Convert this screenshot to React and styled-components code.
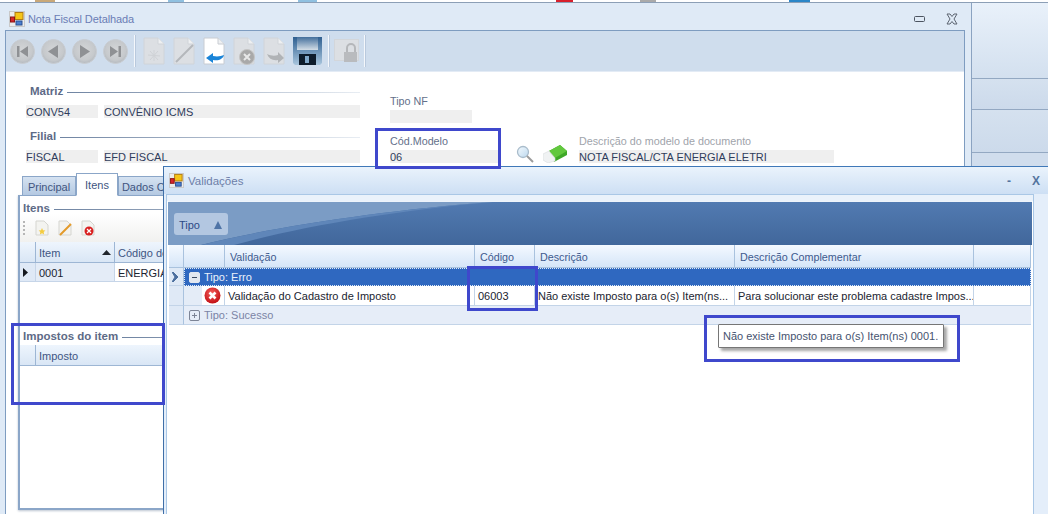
import React from 'react';
import styled, { createGlobalStyle } from 'styled-components';

const GlobalStyle = createGlobalStyle`
  html, body {
    margin: 0;
    padding: 0;
    background: #dfeaf6;
  }
  #root {
    width: 1048px;
    height: 514px;
    overflow: hidden;
    font-family: "Liberation Sans", "Noto Sans", sans-serif;
  }
`;

const Screen = styled.div`
  position: relative;
  width: 1048px;
  height: 514px;
  overflow: hidden;
  display: flex;
  flex-direction: column;
`;

const TopStrip = styled.div`
  height: 2px;
  border-bottom: 1px solid #8c9fb6;
  background: linear-gradient(to right,
    #fff 35px, #c9a878 35px, #c9a878 55px, #fff 55px,
    #fff 168px, #8fc0e0 168px, #8fc0e0 184px, #fff 184px,
    #fff 298px, #8fc0e0 298px, #8fc0e0 317px, #fff 317px,
    #fff 556px, #d8202c 556px, #d8202c 573px, #fff 573px,
    #fff 640px, #aaa 640px, #aaa 656px, #fff 656px,
    #fff 789px, #2a86c8 789px, #2a86c8 810px, #fff 810px);
`;

const Desktop = styled.div`
  flex: 1;
  display: flex;
  min-height: 0;
`;

const MainWindow = styled.div`
  width: 971px;
  border-right: 1px solid #8ba3c1;
  background: #dfeaf6;
  display: flex;
  flex-direction: column;
`;

const TitleBar = styled.div`
  height: 27px;
  box-sizing: border-box;
  display: flex;
  align-items: center;
  padding: 4px 13px 0 9px;
  gap: 3px;
  color: #6b7db5;
  font-size: 11px;
  letter-spacing: -0.1px;
`;

const TitleText = styled.span`
  flex: 1;
`;

const MainControls = styled.div`
  display: flex;
  align-items: center;
  gap: 21px;
`;

const Body = styled.div`
  flex: 1;
  margin: 0 6px 0 5px;
  border: 1px solid #7e9cc0;
  border-bottom: none;
  background: #fff;
  display: flex;
  flex-direction: column;
  min-height: 0;
`;

const Toolbar = styled.div`
  height: 40px;
  background: #cfdded;
  border-bottom: 1px solid #e3ebf5;
  display: flex;
  align-items: center;
  padding-left: 4px;
  flex-shrink: 0;
`;

const NavGroup = styled.div`
  display: flex;
  gap: 6px;
  margin-right: 6px;
`;

const DocGroup = styled.div`
  display: flex;
  align-items: center;
  gap: 8px;
  margin: 0 6px 0 8px;
`;

const LockGroup = styled.div`
  display: flex;
  align-items: center;
  margin: 0 5px;
`;

const Separator = styled.div`
  width: 1px;
  height: 32px;
  background: #f4f7fb;
  box-shadow: 1px 0 0 #b9c9dd;
`;

const Form = styled.div`
  display: flex;
  height: 101px;
  flex-shrink: 0;
`;

const LeftColumn = styled.div`
  width: 334px;
  margin-left: 20px;
  padding-top: 12px;
`;

const RightColumn = styled.div`
  margin-left: 30px;
  padding-top: 22px;
  display: flex;
  flex-direction: column;
`;

const SectionHead = styled.div`
  display: flex;
  align-items: center;
  gap: 4px;
  height: 13px;
  padding-left: 4px;
  margin-bottom: 8px;
  font-size: 11.5px;
  font-weight: 700;
  color: #5d6a86;
  white-space: nowrap;

  &::after {
    content: "";
    flex: 1;
    height: 1px;
    margin-top: 3px;
    background: linear-gradient(to right, #6f84a2, #e8edf3);
  }
`;

const FieldRow = styled.div`
  display: flex;
  gap: 6px;
  margin-bottom: 11px;
`;

const Field = styled.div`
  width: ${p => p.$w}px;
  height: 13px;
  line-height: 15px;
  background: #efefef;
  color: #2f3d5c;
  font-size: 11px;
  white-space: nowrap;
  overflow: hidden;
`;

const FieldLabel = styled.div`
  height: 14px;
  line-height: 14px;
  margin-bottom: 2px;
  color: ${p => (p.$muted ? '#a0a4ab' : '#64708a')};
  font-size: 10.75px;
  white-space: nowrap;
`;

const FieldStack = styled.div`
  display: flex;
  flex-direction: column;
  margin-bottom: ${p => p.$gap || 0}px;
`;

const ModelRow = styled.div`
  display: flex;
  align-items: flex-end;
`;

const LookupIcons = styled.div`
  display: flex;
  align-items: center;
  gap: 9px;
  margin: 0 11px 0 18px;
`;

const TabArea = styled.div`
  flex: 1;
  margin-left: 12px;
  display: flex;
  flex-direction: column;
  min-height: 0;
`;

const TabStrip = styled.div`
  height: 23px;
  display: flex;
  align-items: flex-end;
  padding-left: 4px;
  margin-bottom: -1px;
  position: relative;
`;

const Tab = styled.div`
  height: ${p => (p.$active ? 23 : 20)}px;
  width: ${p => p.$w}px;
  box-sizing: border-box;
  border: 1px solid #8ba6c8;
  border-bottom: ${p => (p.$active ? '1px solid #fff' : '1px solid #8ba6c8')};
  background: ${p => (p.$active ? '#fff' : 'linear-gradient(#d5e2f1, #b4c9e2)')};
  color: #41557f;
  font-size: 11px;
  text-align: center;
  line-height: ${p => (p.$active ? 22 : 20)}px;
  white-space: nowrap;
  overflow: hidden;
`;

const TabPanel = styled.div`
  width: 420px;
  height: 315px;
  box-sizing: border-box;
  border: 1px solid #8ba6c8;
  border-left-width: 2px;
  border-bottom-width: 2px;
  background: #fff;
  box-shadow: 0 1px 2px rgba(90, 110, 140, 0.4);
`;

const PanelHead = styled(SectionHead)`
  margin: 5px 0 0;
  height: 13px;
  padding-left: 3px;
`;

const ItemTools = styled.div`
  height: 28px;
  display: flex;
  align-items: center;
  padding-left: 3px;
  gap: 9px;
  background: linear-gradient(#fff, #f1f1ef);
`;

const Grip = styled.div`
  width: 2px;
  height: 15px;
  margin-right: 1px;
  background: repeating-linear-gradient(#b6b6b6 0 2px, transparent 2px 4px);
`;

const LeftGrid = styled.div`
  display: grid;
  grid-template-columns: 16px 79px 1fr;
  grid-auto-rows: min-content;
  margin-top: ${p => p.$top || 0}px;
`;

const LeftHead = styled.div`
  grid-column: ${p => p.$span || 'auto'};
  height: 21px;
  box-sizing: border-box;
  display: flex;
  align-items: center;
  justify-content: ${p => (p.$spread ? 'space-between' : 'flex-start')};
  padding: 1px 3px 0;
  background: linear-gradient(#eef5fd, #d9e6f5);
  border-right: 1px solid #9db6d4;
  border-bottom: 1px solid #9db6d4;
  color: #3e5582;
  font-size: 11px;
  white-space: nowrap;
`;

const LeftCell = styled.div`
  height: 19px;
  box-sizing: border-box;
  display: flex;
  align-items: center;
  padding: 1px 3px 0;
  background: ${p => p.$tone || '#fff'};
  border-right: 1px solid #c6d5e8;
  border-bottom: 1px solid #c6d5e8;
  color: #1b2430;
  font-size: 11px;
  white-space: nowrap;
`;

const GridGap = styled.div`
  height: 42px;
`;

const ValidationWindow = styled.div`
  position: absolute;
  z-index: 2;
  left: 163px;
  top: 166px;
  right: 0;
  bottom: 0;
  border-left: 1px solid #3f6fa8;
  border-top: 1px solid #3f78b8;
  background: #e4eefa;
  display: flex;
  flex-direction: column;
`;

const ValidationTitle = styled.div`
  height: 27px;
  display: flex;
  align-items: center;
  gap: 4px;
  padding: 0 8px 0 5px;
  color: #6d7ea8;
  font-size: 11.5px;
  background: linear-gradient(#eaf3fc, #cddff4);
`;

const ValidationControls = styled.div`
  display: flex;
  align-items: center;
  gap: 21px;
  padding-top: 1px;
  color: #54749e;
  font-size: 12px;
  font-weight: 700;
`;

const ValidationBody = styled.div`
  flex: 1;
  margin: 0 14px 0 2px;
  border: 1px solid #a9c7e6;
  border-bottom: none;
  display: flex;
  flex-direction: column;
  padding: 6px 1px 0 2px;
  background: linear-gradient(#eaf2fb 6px, #fff 6px);
`;

const GroupPanel = styled.div`
  position: relative;
  height: 44px;
  margin-left: -1px;
  flex-shrink: 0;
  display: flex;
  align-items: center;
  padding: 2px 0 0 6px;
  box-sizing: border-box;
  overflow: hidden;
  background: linear-gradient(#527bb2, #41679b);
  box-shadow: inset 0 1px 0 #eef4fb;
`;

const Swoosh = styled.svg`
  position: absolute;
  left: 0;
  top: 0;
`;

const GroupChip = styled.div`
  position: relative;
  width: 54px;
  height: 22px;
  box-sizing: border-box;
  display: flex;
  align-items: center;
  justify-content: space-between;
  padding: 1px 6px 0 5px;
  border-radius: 3px;
  background: #b3c7e1;
  color: #2c4a86;
  font-size: 11px;
`;

const ChipArrow = styled.span`
  width: 0;
  height: 0;
  border-left: 4px solid transparent;
  border-right: 4px solid transparent;
  border-bottom: 8px solid #4f74a6;
`;

const ResultGrid = styled.div`
  display: grid;
  grid-template-columns: 15px 41px 250px 60px 200px 239px 1fr;
  width: 862px;
`;

const ResultHead = styled.div`
  height: 23px;
  box-sizing: border-box;
  display: flex;
  align-items: center;
  padding: 2px 5px 0;
  background: linear-gradient(#f4f9ff, #d5e5f8);
  border-right: 1px solid #a9c2de;
  border-bottom: 1px solid #a9c2de;
  color: #3e5a8e;
  font-size: 10.75px;
  white-space: nowrap;
`;

const RowHead = styled.div`
  height: ${p => p.$h}px;
  box-sizing: border-box;
  display: flex;
  align-items: center;
  justify-content: center;
  background: #dfe9f6;
  border-right: 1px solid #a9c2de;
  border-bottom: 1px solid #c3d4e8;
  color: #4c6f9e;
`;

const GroupRow = styled.div`
  grid-column: 2 / -1;
  height: ${p => p.$h}px;
  box-sizing: border-box;
  display: flex;
  align-items: center;
  gap: 4px;
  padding-left: 5px;
  font-size: 11px;
  line-height: 13px;
  background: ${p => (p.$selected ? '#2f68c0' : '#e6edf8')};
  color: ${p => (p.$selected ? '#eaf1fb' : '#7b84a6')};
  outline: ${p => (p.$selected ? '1px dotted #dfe9f6' : 'none')};
  outline-offset: -1px;
  border-bottom: ${p => (p.$selected ? 'none' : '1px solid #c3d4e8')};
`;

const IconCell = styled.div`
  height: 20px;
  box-sizing: border-box;
  display: flex;
  align-items: center;
  justify-content: flex-end;
  padding-right: 3px;
  background: linear-gradient(to right, #e4ecf7 18px, #fff 18px);
  border-right: 1px solid #c3d4e8;
  border-bottom: 1px solid #c3d4e8;
`;

const DataCell = styled.div`
  height: 20px;
  box-sizing: border-box;
  line-height: 20px;
  padding: 0 3px;
  background: #fff;
  border-right: 1px solid #c3d4e8;
  border-bottom: 1px solid #c3d4e8;
  color: #1b2430;
  font-size: 11px;
  white-space: nowrap;
  overflow: hidden;
`;

const Tooltip = styled.div`
  position: absolute;
  z-index: 3;
  left: 718px;
  top: 324px;
  width: 226px;
  height: 24px;
  box-sizing: border-box;
  border: 1px solid #767676;
  border-radius: 1px;
  background: #fff;
  box-shadow: 3px 3px 3px rgba(0, 0, 0, 0.35);
  color: #46536f;
  font-size: 11px;
  line-height: 23px;
  padding-left: 4px;
  white-space: nowrap;
`;

const Annotation = styled.div`
  position: absolute;
  z-index: 4;
  left: ${p => p.$x}px;
  top: ${p => p.$y}px;
  width: ${p => p.$w}px;
  height: ${p => p.$h}px;
  box-sizing: border-box;
  border: 3px solid #3f48cc;
  pointer-events: none;
`;

const RightPane = styled.div`
  flex: 1;
  display: flex;
  flex-direction: column;
  background: #d0dded;
`;

const PaneBlock = styled.div`
  height: ${p => p.$h}px;
  flex-shrink: 0;
  border-bottom: 1px solid #93a8c2;
  background: ${p => p.$bg || 'linear-gradient(#d5e1ef, #ccdaeb)'};
`;

const AppIcon = ({ size = 16 }) => (
  <svg width={size} height={size} viewBox="0 0 16 16">
    <rect x="0.500" y="0.500" width="15" height="15" fill="#ececec" stroke="#c9c9c9" />
    <rect x="6" y="1.500" width="8" height="7" fill="#f5c518" stroke="#b07a10" />
    <rect x="1.500" y="6" width="4" height="5" fill="#d8242a" stroke="#8a1515" />
    <rect x="7" y="10" width="6" height="4" fill="#4a7fd0" stroke="#2a4f90" />
  </svg>
);

const NavButton = ({ dir }) => (
  <svg width="25" height="25" viewBox="0 0 25 25">
    <defs>
      <radialGradient id={`nav-${dir}`} cx="50%" cy="45%" r="55%">
        <stop offset="0%" stopColor="#d4d6d8" />
        <stop offset="75%" stopColor="#c6c9cc" />
        <stop offset="100%" stopColor="#b4b9be" />
      </radialGradient>
    </defs>
    <circle cx="12.500" cy="12.500" r="12" fill={`url(#nav-${dir})`} stroke="#c9cdd2" />
    {dir === 'first' && <path d="M7 7h2.500v11H7zM10 12.500 18 7v11z" fill="#8f9194" />}
    {dir === 'prev' && <path d="M7 12.500 17 6v13z" fill="#8f9194" />}
    {dir === 'next' && <path d="M18 12.500 8 6v13z" fill="#8f9194" />}
    {dir === 'last' && <path d="M15.500 7H18v11h-2.500zM15 12.500 7 7v11z" fill="#8f9194" />}
  </svg>
);

const Page = ({ fill = '#dcdfe3', edge = '#d0d4d9', children }) => (
  <svg width="22" height="28" viewBox="0 0 22 28">
    <path d="M1 1h14l6 6v20H1z" fill={fill} stroke={edge} />
    <path d="M15 1v6h6" fill="#eef0f2" stroke={edge} />
    {children}
  </svg>
);

const NewDoc = () => (
  <Page>
    <path d="M11 13v11M5 18l12 1M7 14l8 9M15 14l-8 9" stroke="#cfd2d6" strokeWidth="1" />
  </Page>
);

const EditDoc = () => (
  <Page>
    <path d="M3 25 20 8" stroke="#b4b7bb" strokeWidth="2" />
  </Page>
);

const UndoDoc = () => (
  <Page fill="#fff" edge="#c8ccd2">
    <path d="M21 18c-1 4-5 6-11 5v3l-7-5 7-5v3c5 1 8 0 11-1z" fill="#1a84d8" />
  </Page>
);

const CancelDoc = () => (
  <Page>
    <circle cx="14" cy="20" r="7.500" fill="#a9a9a9" stroke="#c5c5c5" />
    <path d="M11 17l6 6M17 17l-6 6" stroke="#e8e8e8" strokeWidth="2" />
  </Page>
);

const RedoDoc = () => (
  <Page>
    <path d="M4 17c4 2 8 2 11 1v-3l6 6-6 5v-3c-5 1-9-1-11-6z" fill="#b0b3b6" />
  </Page>
);

const SaveIcon = () => (
  <svg width="29" height="28" viewBox="0 0 29 28">
    <defs>
      <linearGradient id="floppy" x1="0" y1="0" x2="0" y2="1">
        <stop offset="0%" stopColor="#2f5f90" />
        <stop offset="100%" stopColor="#a9c6de" />
      </linearGradient>
      <linearGradient id="floppy-label" x1="0" y1="0" x2="0" y2="1">
        <stop offset="0%" stopColor="#436f9c" />
        <stop offset="100%" stopColor="#d3dde6" />
      </linearGradient>
    </defs>
    <path d="M0 0h29v26l-2 2H2l-2-2z" fill="url(#floppy)" />
    <rect x="4" y="0" width="21" height="13" fill="url(#floppy-label)" />
    <rect x="6" y="17" width="17" height="11" fill="#0e1c2c" />
    <rect x="12" y="19" width="4" height="7" fill="#7fa6c8" />
  </svg>
);

const LockIcon = () => (
  <svg width="25" height="26" viewBox="0 0 25 26">
    <rect x="0.500" y="1.500" width="24" height="21" fill="#dcdfe3" stroke="#d3d6da" />
    <path d="M13 15v-5a4 4 0 0 1 8 0v5" fill="none" stroke="#b5b7ba" strokeWidth="2" />
    <rect x="10" y="14" width="13" height="10" fill="#b9bbbe" />
  </svg>
);

const SearchIcon = () => (
  <svg width="18" height="18" viewBox="0 0 18 18">
    <defs>
      <linearGradient id="lens" x1="0" y1="0" x2="1" y2="1">
        <stop offset="0%" stopColor="#f4fafe" />
        <stop offset="100%" stopColor="#bcd8ee" />
      </linearGradient>
    </defs>
    <circle cx="7" cy="7" r="5.500" fill="url(#lens)" stroke="#a9bccb" strokeWidth="1.300" />
    <path d="M11 11l6 6" stroke="#9c9c9c" strokeWidth="2" />
  </svg>
);

const EraserIcon = () => (
  <svg width="25" height="18" viewBox="0 0 25 18">
    <path d="M6 6 17 0l7 6v4L11 17z" fill="#3fa828" />
    <path d="M6 6 17 0l7 6-12 7z" fill="#62c83e" />
    <path d="M0 9l6-3 6 7v3l-7 2-5-3z" fill="#f0f2f3" stroke="#d8dbdd" strokeWidth="0.600" />
  </svg>
);

const SmallDoc = ({ mark }) => (
  <svg width="14" height="16" viewBox="0 0 14 16">
    <path d="M1 1h8l4 4v10H1z" fill="#f3f3f0" stroke="#d5d5d0" />
    {mark === 'star' && <path d="M7 8l1 2.200 2.400.3-1.700 1.600.4 2.400L7 13.300 4.900 14.500l.4-2.400-1.700-1.600 2.400-.3z" fill="#f4cc40" />}
    {mark === 'pencil' && <path d="M2 15 13 4" stroke="#e39a2a" strokeWidth="2" />}
    {mark === 'error' && (
      <g>
        <circle cx="8" cy="11" r="4.500" fill="#d92020" />
        <path d="M6 9l4 4M10 9l-4 4" stroke="#fff" strokeWidth="1.200" />
      </g>
    )}
  </svg>
);

const ErrorIcon = () => (
  <svg width="17" height="17" viewBox="0 0 17 17">
    <defs>
      <radialGradient id="err" cx="45%" cy="35%" r="65%">
        <stop offset="0%" stopColor="#f4605c" />
        <stop offset="100%" stopColor="#c20f14" />
      </radialGradient>
    </defs>
    <circle cx="8.500" cy="8.500" r="8" fill="url(#err)" />
    <path d="M5.500 5.500l6 6M11.500 5.500l-6 6" stroke="#fff" strokeWidth="2.600" />
  </svg>
);

const Expander = ({ open, light }) => (
  <svg width="11" height="11" viewBox="0 0 11 11">
    <rect x="0.500" y="0.500" width="10" height="10" rx="1.500" fill={light ? '#e3e8f0' : 'none'} stroke={light ? '#e3e8f0' : '#7c8496'} />
    <path d={open ? 'M3 5.500h5' : 'M3 5.500h5M5.500 3v5'} stroke={light ? '#3a4a62' : '#7c8496'} strokeWidth="1" />
  </svg>
);

const ChevronPointer = () => (
  <svg width="8" height="10" viewBox="0 0 8 10">
    <path d="M1 0l5 5-5 5H0l3-5-3-5z" fill="#4c6f9e" stroke="#4c6f9e" />
  </svg>
);

const RowPointer = () => (
  <svg width="5" height="9" viewBox="0 0 5 9">
    <path d="M0 0l5 4.500L0 9z" fill="#14181e" />
  </svg>
);

const MainClose = () => (
  <svg width="12" height="12" viewBox="0 0 12 12">
    <path d="M1 1h3l2 2.500L8 1h3L8 6l3 5H8L6 8.500 4 11H1l3-5z" fill="none" stroke="#5c6470" />
  </svg>
);

const MainMin = () => (
  <svg width="11" height="6" viewBox="0 0 11 6">
    <rect x="0.500" y="0.500" width="10" height="5" rx="1" fill="none" stroke="#4c5460" />
  </svg>
);

const SortUp = () => (
  <svg width="9" height="5" viewBox="0 0 9 5">
    <path d="M0 5 4.500 0 9 5z" fill="#20252c" />
  </svg>
);

const App = () => (
  <Screen>
    <GlobalStyle />
    <TopStrip />
    <Desktop>
      <MainWindow>
        <TitleBar>
          <AppIcon />
          <TitleText>Nota Fiscal Detalhada</TitleText>
          <MainControls>
            <MainMin />
            <MainClose />
          </MainControls>
        </TitleBar>
        <Body>
          <Toolbar>
            <NavGroup>
              <NavButton dir="first" />
              <NavButton dir="prev" />
              <NavButton dir="next" />
              <NavButton dir="last" />
            </NavGroup>
            <Separator />
            <DocGroup>
              <NewDoc />
              <EditDoc />
              <UndoDoc />
              <CancelDoc />
              <RedoDoc />
              <SaveIcon />
            </DocGroup>
            <Separator />
            <LockGroup>
              <LockIcon />
            </LockGroup>
            <Separator />
          </Toolbar>
          <Form>
            <LeftColumn>
              <SectionHead>Matriz</SectionHead>
              <FieldRow>
                <Field $w={72}>CONV54</Field>
                <Field $w={256}>CONVÊNIO ICMS</Field>
              </FieldRow>
              <SectionHead>Filial</SectionHead>
              <FieldRow>
                <Field $w={72}>FISCAL</Field>
                <Field $w={256}>EFD FISCAL</Field>
              </FieldRow>
            </LeftColumn>
            <RightColumn>
              <FieldStack $gap={11}>
                <FieldLabel>Tipo NF</FieldLabel>
                <Field $w={82} />
              </FieldStack>
              <ModelRow>
                <FieldStack>
                  <FieldLabel>Cód.Modelo</FieldLabel>
                  <Field $w={108}>06</Field>
                </FieldStack>
                <LookupIcons>
                  <SearchIcon />
                  <EraserIcon />
                </LookupIcons>
                <FieldStack>
                  <FieldLabel $muted>Descrição do modelo de documento</FieldLabel>
                  <Field $w={255}>NOTA FISCAL/CTA ENERGIA ELETRI</Field>
                </FieldStack>
              </ModelRow>
            </RightColumn>
          </Form>
          <TabArea>
            <TabStrip>
              <Tab $w={54}>Principal</Tab>
              <Tab $w={42} $active>Itens</Tab>
              <Tab $w={72}>Dados Comp</Tab>
            </TabStrip>
            <TabPanel>
              <PanelHead>Itens</PanelHead>
              <ItemTools>
                <Grip />
                <SmallDoc mark="star" />
                <SmallDoc mark="pencil" />
                <SmallDoc mark="error" />
              </ItemTools>
              <LeftGrid>
                <LeftHead />
                <LeftHead $spread>Item <SortUp /></LeftHead>
                <LeftHead>Código do</LeftHead>
                <LeftCell $tone="#dfe9f6"><RowPointer /></LeftCell>
                <LeftCell $tone="#e4ecf7">0001</LeftCell>
                <LeftCell>ENERGIA</LeftCell>
              </LeftGrid>
              <GridGap />
              <PanelHead>Impostos do item</PanelHead>
              <LeftGrid $top={3}>
                <LeftHead />
                <LeftHead $span="2 / -1">Imposto</LeftHead>
              </LeftGrid>
            </TabPanel>
          </TabArea>
        </Body>
      </MainWindow>
      <RightPane>
        <PaneBlock $h={75} $bg="linear-gradient(#e9f1fa, #d3e0ef)" />
        <PaneBlock $h={30} />
        <PaneBlock $h={42} />
      </RightPane>
    </Desktop>

    <ValidationWindow>
      <ValidationTitle>
        <AppIcon size={15} />
        <TitleText>Validações</TitleText>
        <ValidationControls>
          <span>-</span>
          <span>X</span>
        </ValidationControls>
      </ValidationTitle>
      <ValidationBody>
        <GroupPanel>
          <Swoosh width="864" height="44" viewBox="0 0 864 44">
            <path d="M0 1H325C215 9 100 27 33 44H0Z" fill="#7b9cc5" />
            <path d="M325 1C215 9 100 27 33 44H66C130 26 230 9 325 1Z" fill="#5f86b9" />
          </Swoosh>
          <GroupChip>Tipo <ChipArrow /></GroupChip>
        </GroupPanel>
        <ResultGrid>
          <ResultHead />
          <ResultHead />
          <ResultHead>Validação</ResultHead>
          <ResultHead>Código</ResultHead>
          <ResultHead>Descrição</ResultHead>
          <ResultHead>Descrição Complementar</ResultHead>
          <ResultHead />

          <RowHead $h={18}><ChevronPointer /></RowHead>
          <GroupRow $h={18} $selected><Expander open light /> Tipo: Erro</GroupRow>

          <RowHead $h={20} />
          <IconCell><ErrorIcon /></IconCell>
          <DataCell>Validação do Cadastro de Imposto</DataCell>
          <DataCell>06003</DataCell>
          <DataCell>Não existe Imposto para o(s) Item(ns...</DataCell>
          <DataCell>Para solucionar este problema cadastre Impos...</DataCell>
          <DataCell />

          <RowHead $h={19} />
          <GroupRow $h={19}><Expander /> Tipo: Sucesso</GroupRow>
        </ResultGrid>
      </ValidationBody>
    </ValidationWindow>

    <Tooltip>Não existe Imposto para o(s) Item(ns) 0001.</Tooltip>

    <Annotation $x={375} $y={128} $w={126} $h={41} />
    <Annotation $x={467} $y={266} $w={71} $h={45} />
    <Annotation $x={704} $y={315} $w={256} $h={47} />
    <Annotation $x={11} $y={323} $w={154} $h={82} />
  </Screen>
);

export default App;
